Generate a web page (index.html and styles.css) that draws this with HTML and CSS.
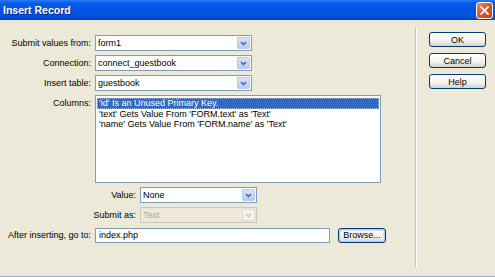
FILE: index.html
```html
<!DOCTYPE html>
<html lang="en">
<head>
  <meta charset="UTF-8">
  <title>Insert Record</title>
  <link rel="stylesheet" href="styles.css">
</head>
<body>
  <div class="window">
    <div class="titlebar">
      <span class="title">Insert Record</span>
      <span class="close">
        <svg width="9" height="9" viewBox="0 0 9 9"><path d="M1 1 L8 8 M8 1 L1 8" stroke="#fff" stroke-width="1.8" stroke-linecap="square"/></svg>
      </span>
    </div>
    <div class="content">
      <div class="form">
        <div class="row">
          <label class="label">Submit values from:</label>
          <div class="select wide"><span>form1</span><span class="arrow"><svg width="7" height="5" viewBox="0 0 7 5"><path d="M1 1 L3.5 3.5 L6 1" fill="none" stroke="#4d6185" stroke-width="1.5"/></svg></span></div>
        </div>
        <div class="row">
          <label class="label">Connection:</label>
          <div class="select wide"><span>connect_guestbook</span><span class="arrow"><svg width="7" height="5" viewBox="0 0 7 5"><path d="M1 1 L3.5 3.5 L6 1" fill="none" stroke="#4d6185" stroke-width="1.5"/></svg></span></div>
        </div>
        <div class="row">
          <label class="label">Insert table:</label>
          <div class="select wide"><span>guestbook</span><span class="arrow"><svg width="7" height="5" viewBox="0 0 7 5"><path d="M1 1 L3.5 3.5 L6 1" fill="none" stroke="#4d6185" stroke-width="1.5"/></svg></span></div>
        </div>
        <div class="row tall">
          <label class="label">Columns:</label>
          <div class="listbox">
            <div class="item selected">'id' Is an Unused Primary Key.</div>
            <div class="item">'text' Gets Value From 'FORM.text' as 'Text'</div>
            <div class="item">'name' Gets Value From 'FORM.name' as 'Text'</div>
          </div>
        </div>
        <div class="row indent">
          <label class="label">Value:</label>
          <div class="select short"><span>None</span><span class="arrow"><svg width="7" height="5" viewBox="0 0 7 5"><path d="M1 1 L3.5 3.5 L6 1" fill="none" stroke="#4d6185" stroke-width="1.5"/></svg></span></div>
        </div>
        <div class="row indent">
          <label class="label">Submit as:</label>
          <div class="select short disabled"><span>Text</span><span class="arrow"><svg width="7" height="5" viewBox="0 0 7 5"><path d="M1 1 L3.5 3.5 L6 1" fill="none" stroke="#c9c7ba" stroke-width="1.5"/></svg></span></div>
        </div>
        <div class="row">
          <label class="label">After inserting, go to:</label>
          <div class="textbox">index.php</div>
          <button class="btn default">Browse...</button>
        </div>
      </div>
      <div class="separator"></div>
      <div class="buttons">
        <button class="btn">OK</button>
        <button class="btn">Cancel</button>
        <button class="btn">Help</button>
      </div>
    </div>
  </div>
</body>
</html>
```

FILE: styles.css
```css
body {
  margin: 0;
  font-family: 'Liberation Sans', Arial, sans-serif;
  font-size: 9px;
  color: #000;
  background: #ece9d8;
}
.window {
  width: 495px;
  height: 277px;
  display: flex;
  flex-direction: column;
  background: #ece9d8;
  border-bottom: 1px solid #8eaee0;
  box-sizing: border-box;
}
.titlebar {
  height: 20px;
  flex: none;
  display: flex;
  align-items: center;
  justify-content: space-between;
  padding: 0 2px 0 3px;
  background: linear-gradient(#2a7cf5 0%, #0a5be8 15%, #0054e3 50%, #0050dc 80%, #0042c4 100%);
}
.title {
  color: #fff;
  font-weight: bold;
  font-size: 10.5px;
  text-shadow: 1px 1px 0 #0a2a8a;
}
.close {
  width: 15px;
  height: 15px;
  border: 1px solid #fff;
  border-radius: 3px;
  background: linear-gradient(135deg, #f08a6c, #e0532d 50%, #c8401e);
  display: flex;
  align-items: center;
  justify-content: center;
}
.content {
  flex: 1;
  display: flex;
}
.form {
  width: 415px;
  padding-top: 15px;
  display: flex;
  flex-direction: column;
  gap: 4px;
}
.row {
  display: flex;
  align-items: center;
  height: 16px;
}
.row.tall {
  height: 88px;
  align-items: flex-start;
}
.label {
  width: 91px;
  padding-right: 4px;
  text-align: right;
  flex: none;
}
.row.tall .label {
  padding-top: 3px;
}
.row.indent .label {
  width: 136px;
}
.select {
  height: 16px;
  box-sizing: border-box;
  border: 1px solid #7f9db9;
  background: #fff;
  display: flex;
  align-items: center;
  justify-content: space-between;
  padding-left: 2px;
}
.select.wide {
  width: 157px;
}
.select.short {
  width: 117px;
}
.select.disabled {
  background: #ece9d8;
  border-color: #c9c7ba;
  color: #aca899;
}
.arrow {
  width: 13px;
  height: 12px;
  margin-right: 1px;
  box-sizing: border-box;
  border: 1px solid #b9ccf5;
  border-radius: 1px;
  background: linear-gradient(#d7e3fd, #b8cbf8);
  display: flex;
  align-items: center;
  justify-content: center;
}
.select.disabled .arrow {
  background: #f3f2ec;
  border-color: #dcdad0;
}
.listbox {
  width: 286px;
  height: 88px;
  box-sizing: border-box;
  border: 1px solid #7f9db9;
  background: #fff;
  padding: 2px 1px;
}
.item {
  height: 10.5px;
  line-height: 10.5px;
  padding-left: 2px;
  white-space: nowrap;
}
.item.selected {
  background: #316ac5;
  color: #fff;
  outline: 1px dotted #9bb5e0;
  outline-offset: -1px;
}
.textbox {
  width: 235px;
  height: 15px;
  box-sizing: border-box;
  border: 1px solid #7f9db9;
  background: #fff;
  padding-left: 3px;
  line-height: 13px;
}
.btn {
  font-family: inherit;
  font-size: 9px;
  color: #000;
  height: 15px;
  box-sizing: border-box;
  border: 1px solid #003c74;
  border-radius: 3px;
  background: linear-gradient(#fff, #f4f3ee 60%, #d6d0c5);
  padding: 0;
}
.btn.default {
  width: 48px;
  margin-left: 8px;
  box-shadow: inset 0 0 0 1px #b6cbf2, inset 0 0 0 2px #d3e0f8;
}
.separator {
  width: 1px;
  margin: 7px 0 9px;
  border-right: 1px solid #fff;
  background: #c5c2b2;
}
.buttons {
  padding: 12px 0 0 12px;
  display: flex;
  flex-direction: column;
  gap: 6px;
}
.buttons .btn {
  width: 57px;
}
```
